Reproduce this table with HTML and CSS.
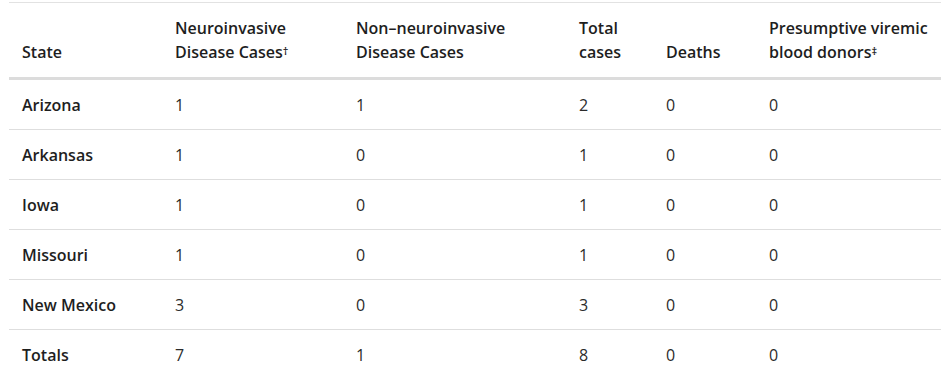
FILE: index.html
```html
<!DOCTYPE html>
<html lang="en">
<head>
<meta charset="utf-8">
<title>West Nile virus cases by state</title>
<link rel="stylesheet" href="styles.css">
</head>
<body>
<div class="wrap">
<table class="data">
  <colgroup>
    <col class="c1"><col class="c2"><col class="c3"><col class="c4"><col class="c5"><col class="c6">
  </colgroup>
  <thead>
    <tr>
      <th>State</th>
      <th>Neuroinvasive Disease Cases<sup>†</sup></th>
      <th>Non–neuroinvasive Disease Cases</th>
      <th>Total cases</th>
      <th>Deaths</th>
      <th>Presumptive viremic blood donors<sup>‡</sup></th>
    </tr>
  </thead>
  <tbody>
    <tr><th>Arizona</th><td>1</td><td>1</td><td>2</td><td>0</td><td>0</td></tr>
    <tr><th>Arkansas</th><td>1</td><td>0</td><td>1</td><td>0</td><td>0</td></tr>
    <tr><th>Iowa</th><td>1</td><td>0</td><td>1</td><td>0</td><td>0</td></tr>
    <tr><th>Missouri</th><td>1</td><td>0</td><td>1</td><td>0</td><td>0</td></tr>
    <tr><th>New Mexico</th><td>3</td><td>0</td><td>3</td><td>0</td><td>0</td></tr>
    <tr class="last"><th>Totals</th><td>7</td><td>1</td><td>8</td><td>0</td><td>0</td></tr>
  </tbody>
</table>
</div>
</body>
</html>
```
FILE: styles.css
```css
html, body {
  margin: 0;
  padding: 0;
  background: #ffffff;
}
body {
  font-family: "Open Sans", "Liberation Sans", sans-serif;
  font-size: 16px;
  color: #1c1c1c;
}
.wrap {
  padding: 2px 0 0 9px;
}
.data {
  border-collapse: collapse;
  table-layout: fixed;
  width: 932px;
  border-top: 1px solid #e2e2e2;
}
.c1 { width: 153px; }
.c2 { width: 181px; }
.c3 { width: 223px; }
.c4 { width: 87px; }
.c5 { width: 103px; }
.c6 { width: 185px; }

.data th,
.data td {
  text-align: left;
  line-height: 24px;
  padding: 13px 12px 12px 13px;
  border-bottom: 1px solid #dedede;
}
.data th {
  font-weight: 600;
  color: #1e1e1e;
}
.data td {
  font-weight: 400;
  color: #2b2b2b;
}
.data thead th {
  vertical-align: bottom;
  padding-bottom: 13px;
  border-bottom: 3px solid #dcdcdc;
}
.data tbody tr.last th,
.data tbody tr.last td {
  border-bottom: none;
}
.data sup {
  font-size: 11px;
  line-height: 0;
  vertical-align: 3px;
}
```
